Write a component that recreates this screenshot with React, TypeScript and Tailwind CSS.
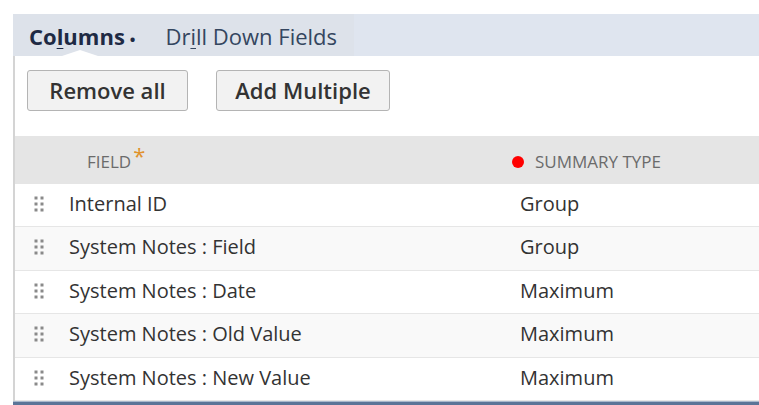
import React from "react";

const rows = [
  { f: "Internal ID", s: "Group", h: "h-[43px]" },
  { f: "System Notes : Field", s: "Group", h: "h-[44px]" },
  { f: "System Notes : Date", s: "Maximum", h: "h-[43px]" },
  { f: "System Notes : Old Value", s: "Maximum", h: "h-[44px]" },
  { f: "System Notes : New Value", s: "Maximum", h: "h-[43px]" },
];

function Grip() {
  return (
    <svg width="12" height="18" viewBox="0 0 12 18" className="shrink-0">
      {[3, 9, 15].map((y) =>
        [3, 9].map((x) => <rect key={`${x}-${y}`} x={x - 1.5} y={y - 1.5} width="3" height="3" fill="#8a8a8a" />)
      )}
    </svg>
  );
}

export default function App() {
  return (
    <div
      className="w-[759px] h-[405px] bg-white overflow-hidden pt-[14px]"
      style={{ fontFamily: '"Open Sans", "Noto Sans", sans-serif' }}
    >
      <div className="ml-[13px] h-[42px] bg-[#dfe5ef] flex">
        <div className="w-[341px] bg-[#dde2ea] flex items-center relative pt-[2px]">
          <div className="pl-[16px] text-[22px] font-bold text-[#1e2a44] leading-none relative">
            Co<span className="underline underline-offset-[3px] decoration-1">l</span>umns
            <span className="text-[15px] align-middle ml-[5px]">•</span>
          </div>
          <div className="pl-[30px] text-[22px] text-[#34465f] leading-none">
            Dr<span className="underline underline-offset-[3px] decoration-1">i</span>ll Down Fields
          </div>
          <div className="absolute left-[49px] bottom-0 w-0 h-0 border-l-[18px] border-r-[18px] border-b-[6px] border-l-transparent border-r-transparent border-b-white" />
        </div>
      </div>
      <div className="ml-[13px] border-l-2 border-[#d4d4d4] flex flex-col">
        <div className="flex gap-[28px] pl-[12px] pt-[14px] pb-[25px]">
          <button className="h-[41px] w-[161px] bg-[#f2f2f2] border border-[#b4b4b4] rounded-[3px] text-[22px] font-semibold text-[#333]">
            Remove all
          </button>
          <button className="h-[41px] w-[174px] bg-[#f2f2f2] border border-[#b4b4b4] rounded-[3px] text-[22px] font-semibold text-[#333]">
            Add Multiple
          </button>
        </div>
        <div className="h-[48px] bg-[#e5e5e5] flex items-center text-[17px] text-[#6b6b6b] uppercase pt-[4px]">
          <div className="pl-[72px] w-[497px] flex items-start">
            <span>Field</span>
            <span className="text-[#e0922c] text-[22px] leading-none ml-[2px] -mt-[5px]">*</span>
          </div>
          <div className="flex items-center">
            <span className="w-[12px] h-[12px] rounded-full bg-[#ff0000] mr-[11px]" />
            <span>Summary Type</span>
          </div>
        </div>
        {rows.map((r, i) => (
          <div
            key={r.f}
            className={`${r.h} flex items-center border-b border-[#e6e6e6] text-[20px] text-[#333] pb-[3px] ${
              i % 2 === 1 ? "bg-[#f9f9f9]" : "bg-white"
            }`}
          >
            <div className="pl-[18px] w-[505px] flex items-center">
              <Grip />
              <span className="ml-[24px]">{r.f}</span>
            </div>
            <span>{r.s}</span>
          </div>
        ))}
      </div>
      <div className="ml-[13px] h-[4px] bg-[#5b7497] border-t border-[#a9b8cc]" />
    </div>
  );
}
